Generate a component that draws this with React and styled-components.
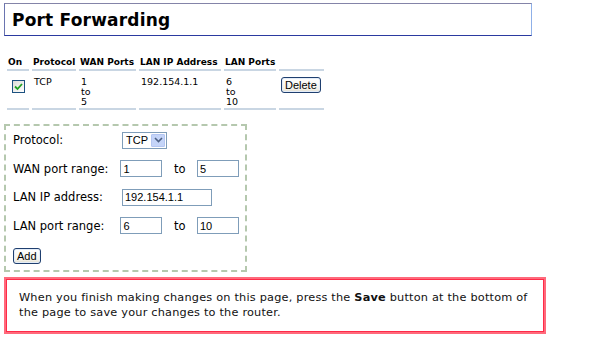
import React from "react";
import styled, { createGlobalStyle } from "styled-components";

const GlobalStyle = createGlobalStyle`
  body {
    margin: 0;
    background: #ffffff;
    font-family: "DejaVu Sans", Verdana, sans-serif;
    color: #000000;
  }
`;

const rules = [
  { on: true, protocol: "TCP", wan: ["1", "to", "5"], ip: "192.154.1.1", lan: ["6", "to", "10"] },
];

const App = () => {
  return (
    <Page>
      <GlobalStyle />
      <TitleBox>
        <Title>Port Forwarding</Title>
      </TitleBox>

      <RuleTable>
        <thead>
          <tr>
            <Th $w={22}>On</Th>
            <Th $w={44}>Protocol</Th>
            <Th $w={57}>WAN Ports</Th>
            <Th $w={82}>LAN IP Address</Th>
            <Th $w={52}>LAN Ports</Th>
            <Th $w={45} />
          </tr>
        </thead>
        <tbody>
          {rules.map((r, i) => (
            <tr key={i}>
              <Td>
                <Check>
                  {r.on && (
                    <svg width="9" height="9" viewBox="0 0 9 9">
                      <path d="M1 4.5 L3.5 7 L8 2" stroke="#21a121" strokeWidth="1.8" fill="none" />
                    </svg>
                  )}
                </Check>
              </Td>
              <Td>{r.protocol}</Td>
              <Td>
                {r.wan.map((l, j) => (
                  <div key={j}>{l}</div>
                ))}
              </Td>
              <Td>{r.ip}</Td>
              <Td>
                {r.lan.map((l, j) => (
                  <div key={j}>{l}</div>
                ))}
              </Td>
              <Td>
                <XpButton>Delete</XpButton>
              </Td>
            </tr>
          ))}
        </tbody>
      </RuleTable>

      <FormBox>
        <FormRow>
          <Label>Protocol:</Label>
          <Select>
            <span>TCP</span>
            <DropArrow>
              <svg width="9" height="6" viewBox="0 0 9 6">
                <path d="M1 1 L4.5 4.5 L8 1" stroke="#4d6185" strokeWidth="1.6" fill="none" />
              </svg>
            </DropArrow>
          </Select>
        </FormRow>
        <FormRow>
          <Label>WAN port range:</Label>
          <Field $w={42} defaultValue="1" />
          <To>to</To>
          <Field $w={42} defaultValue="5" />
        </FormRow>
        <FormRow>
          <Label>LAN IP address:</Label>
          <Field $w={90} defaultValue="192.154.1.1" />
        </FormRow>
        <FormRow>
          <Label>LAN port range:</Label>
          <Field $w={42} defaultValue="6" />
          <To>to</To>
          <Field $w={42} defaultValue="10" />
        </FormRow>
        <AddRow>
          <XpButton>Add</XpButton>
        </AddRow>
      </FormBox>

      <Notice>
        When you finish making changes on this page, press the <b>Save</b> button at the bottom of
        the page to save your changes to the router.
      </Notice>
    </Page>
  );
};

const Page = styled.div`
  padding: 3px 4px;
  width: 542px;
`;

const TitleBox = styled.div`
  width: 526px;
  height: 31px;
  border: 1px solid #2b3aa0;
  border-top-color: #8484a8;
  border-left-color: #6a74b0;
  border-right-color: #8fb0e8;
  display: flex;
  align-items: center;
`;

const Title = styled.h1`
  margin: 0 0 0 7px;
  font-size: 17px;
  font-weight: bold;
  letter-spacing: 0.2px;
`;

const RuleTable = styled.table`
  margin: 21px 0 0 0;
  border-collapse: separate;
  border-spacing: 3px 0;
  table-layout: fixed;
  font-size: 9.5px;
`;

const Th = styled.th`
  box-sizing: border-box;
  width: ${(p) => p.$w}px;
  text-align: left;
  font-size: 9px;
  font-weight: bold;
  padding: 0 0 2px 1px;
  border-bottom: 2px solid #c9d6e3;
  white-space: nowrap;
  overflow: hidden;
`;

const Td = styled.td`
  vertical-align: top;
  padding: 6px 0 1px 2px;
  line-height: 10px;
  border-bottom: 2px solid #c9d6e3;
`;

const Check = styled.span`
  display: inline-flex;
  align-items: center;
  justify-content: center;
  width: 11px;
  height: 11px;
  margin: 3px 0 0 3px;
  border: 1px solid #1c5180;
  background: linear-gradient(135deg, #dcdcd7, #ffffff);
`;

const XpButton = styled.button`
  font-family: "Liberation Sans", Tahoma, sans-serif;
  font-size: 11px;
  color: #000000;
  padding: 0 3px;
  height: 16px;
  line-height: 14px;
  border: 1px solid #1f3f6f;
  border-radius: 3px;
  background: linear-gradient(#ffffff, #f3f1e8 80%, #dcd8c8);
  box-shadow: inset 0 0 0 1px #e3ecf8;
  cursor: pointer;
`;

const FormBox = styled.div`
  margin-top: 14px;
  width: 226px;
  border: 2px dashed #b5c8ae;
  padding: 0 6px 6px 7px;
`;

const FormRow = styled.div`
  display: flex;
  align-items: center;
  height: 28.5px;
  font-size: 11.5px;
`;

const Label = styled.span`
  width: 109px;
`;

const Select = styled.div`
  display: flex;
  align-items: center;
  justify-content: space-between;
  width: 40px;
  height: 15px;
  border: 1px solid #7f9db9;
  padding-left: 3px;
  font-family: "Liberation Sans", Tahoma, sans-serif;
  font-size: 11px;
  box-sizing: content-box;
`;

const DropArrow = styled.span`
  display: flex;
  align-items: center;
  justify-content: center;
  width: 14px;
  height: 13px;
  margin-right: 1px;
  background: #c4d4f8;
  border: 1px solid #b4c6f2;
  box-sizing: border-box;
  border-radius: 1px;
`;

const Field = styled.input`
  width: ${(p) => p.$w}px;
  height: 17px;
  box-sizing: border-box;
  border: 1px solid #7f9db9;
  padding: 0 2px;
  font-family: "Liberation Sans", Tahoma, sans-serif;
  font-size: 11px;
  outline: none;
`;

const To = styled.span`
  width: 35px;
  text-align: center;
`;

const AddRow = styled.div`
  padding-top: 5px;
`;

const Notice = styled.div`
  margin-top: 5px;
  width: 517px;
  border: 2px solid #ff6a7c;
  box-shadow: inset 0 0 0 1px #ff2a48;
  padding: 11px 8px 12px 13px;
  font-size: 11.3px;
  letter-spacing: 0.2px;
  line-height: 15px;
  color: #111111;
`;

export default App;
